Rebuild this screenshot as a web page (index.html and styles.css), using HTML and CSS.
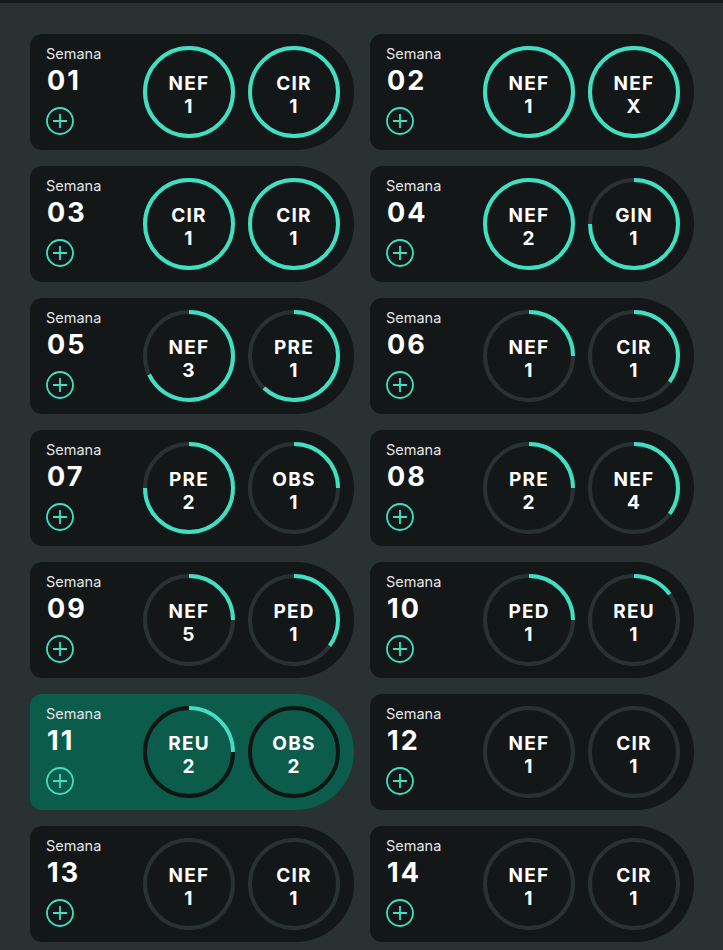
FILE: index.html
```html
<!DOCTYPE html>
<html lang="es">
<head>
<meta charset="utf-8">
<link rel="stylesheet" href="styles.css">
</head>
<body>
<div class="topbar"></div>
<main class="grid">
  <div class="card">
    <div class="info"><span class="label">Semana</span><span class="num">01</span>
      <svg class="add" viewBox="0 0 28 28"><circle cx="14" cy="14" r="13"/><path d="M14 7v14M7 14h14"/></svg></div>
    <div class="rings">
      <div class="ring"><svg viewBox="0 0 92 92"><circle class="track" cx="46" cy="46" r="44"/><circle class="prog" cx="46" cy="46" r="44" pathLength="100" stroke-dasharray="100 100"/></svg><span class="rt">NEF<br>1</span></div>
      <div class="ring"><svg viewBox="0 0 92 92"><circle class="track" cx="46" cy="46" r="44"/><circle class="prog" cx="46" cy="46" r="44" pathLength="100" stroke-dasharray="100 100"/></svg><span class="rt">CIR<br>1</span></div>
    </div>
  </div>
  <div class="card">
    <div class="info"><span class="label">Semana</span><span class="num">02</span>
      <svg class="add" viewBox="0 0 28 28"><circle cx="14" cy="14" r="13"/><path d="M14 7v14M7 14h14"/></svg></div>
    <div class="rings">
      <div class="ring"><svg viewBox="0 0 92 92"><circle class="track" cx="46" cy="46" r="44"/><circle class="prog" cx="46" cy="46" r="44" pathLength="100" stroke-dasharray="100 100"/></svg><span class="rt">NEF<br>1</span></div>
      <div class="ring"><svg viewBox="0 0 92 92"><circle class="track" cx="46" cy="46" r="44"/><circle class="prog" cx="46" cy="46" r="44" pathLength="100" stroke-dasharray="100 100"/></svg><span class="rt">NEF<br>X</span></div>
    </div>
  </div>
  <div class="card">
    <div class="info"><span class="label">Semana</span><span class="num">03</span>
      <svg class="add" viewBox="0 0 28 28"><circle cx="14" cy="14" r="13"/><path d="M14 7v14M7 14h14"/></svg></div>
    <div class="rings">
      <div class="ring"><svg viewBox="0 0 92 92"><circle class="track" cx="46" cy="46" r="44"/><circle class="prog" cx="46" cy="46" r="44" pathLength="100" stroke-dasharray="100 100"/></svg><span class="rt">CIR<br>1</span></div>
      <div class="ring"><svg viewBox="0 0 92 92"><circle class="track" cx="46" cy="46" r="44"/><circle class="prog" cx="46" cy="46" r="44" pathLength="100" stroke-dasharray="100 100"/></svg><span class="rt">CIR<br>1</span></div>
    </div>
  </div>
  <div class="card">
    <div class="info"><span class="label">Semana</span><span class="num">04</span>
      <svg class="add" viewBox="0 0 28 28"><circle cx="14" cy="14" r="13"/><path d="M14 7v14M7 14h14"/></svg></div>
    <div class="rings">
      <div class="ring"><svg viewBox="0 0 92 92"><circle class="track" cx="46" cy="46" r="44"/><circle class="prog" cx="46" cy="46" r="44" pathLength="100" stroke-dasharray="100 100"/></svg><span class="rt">NEF<br>2</span></div>
      <div class="ring"><svg viewBox="0 0 92 92"><circle class="track" cx="46" cy="46" r="44"/><circle class="prog" cx="46" cy="46" r="44" pathLength="100" stroke-dasharray="75 100"/></svg><span class="rt">GIN<br>1</span></div>
    </div>
  </div>
  <div class="card">
    <div class="info"><span class="label">Semana</span><span class="num">05</span>
      <svg class="add" viewBox="0 0 28 28"><circle cx="14" cy="14" r="13"/><path d="M14 7v14M7 14h14"/></svg></div>
    <div class="rings">
      <div class="ring"><svg viewBox="0 0 92 92"><circle class="track" cx="46" cy="46" r="44"/><circle class="prog" cx="46" cy="46" r="44" pathLength="100" stroke-dasharray="68 100"/></svg><span class="rt">NEF<br>3</span></div>
      <div class="ring"><svg viewBox="0 0 92 92"><circle class="track" cx="46" cy="46" r="44"/><circle class="prog" cx="46" cy="46" r="44" pathLength="100" stroke-dasharray="62 100"/></svg><span class="rt">PRE<br>1</span></div>
    </div>
  </div>
  <div class="card">
    <div class="info"><span class="label">Semana</span><span class="num">06</span>
      <svg class="add" viewBox="0 0 28 28"><circle cx="14" cy="14" r="13"/><path d="M14 7v14M7 14h14"/></svg></div>
    <div class="rings">
      <div class="ring"><svg viewBox="0 0 92 92"><circle class="track" cx="46" cy="46" r="44"/><circle class="prog" cx="46" cy="46" r="44" pathLength="100" stroke-dasharray="25 100"/></svg><span class="rt">NEF<br>1</span></div>
      <div class="ring"><svg viewBox="0 0 92 92"><circle class="track" cx="46" cy="46" r="44"/><circle class="prog" cx="46" cy="46" r="44" pathLength="100" stroke-dasharray="35 100"/></svg><span class="rt">CIR<br>1</span></div>
    </div>
  </div>
  <div class="card">
    <div class="info"><span class="label">Semana</span><span class="num">07</span>
      <svg class="add" viewBox="0 0 28 28"><circle cx="14" cy="14" r="13"/><path d="M14 7v14M7 14h14"/></svg></div>
    <div class="rings">
      <div class="ring"><svg viewBox="0 0 92 92"><circle class="track" cx="46" cy="46" r="44"/><circle class="prog" cx="46" cy="46" r="44" pathLength="100" stroke-dasharray="75 100"/></svg><span class="rt">PRE<br>2</span></div>
      <div class="ring"><svg viewBox="0 0 92 92"><circle class="track" cx="46" cy="46" r="44"/><circle class="prog" cx="46" cy="46" r="44" pathLength="100" stroke-dasharray="25 100"/></svg><span class="rt">OBS<br>1</span></div>
    </div>
  </div>
  <div class="card">
    <div class="info"><span class="label">Semana</span><span class="num">08</span>
      <svg class="add" viewBox="0 0 28 28"><circle cx="14" cy="14" r="13"/><path d="M14 7v14M7 14h14"/></svg></div>
    <div class="rings">
      <div class="ring"><svg viewBox="0 0 92 92"><circle class="track" cx="46" cy="46" r="44"/><circle class="prog" cx="46" cy="46" r="44" pathLength="100" stroke-dasharray="25 100"/></svg><span class="rt">PRE<br>2</span></div>
      <div class="ring"><svg viewBox="0 0 92 92"><circle class="track" cx="46" cy="46" r="44"/><circle class="prog" cx="46" cy="46" r="44" pathLength="100" stroke-dasharray="35 100"/></svg><span class="rt">NEF<br>4</span></div>
    </div>
  </div>
  <div class="card">
    <div class="info"><span class="label">Semana</span><span class="num">09</span>
      <svg class="add" viewBox="0 0 28 28"><circle cx="14" cy="14" r="13"/><path d="M14 7v14M7 14h14"/></svg></div>
    <div class="rings">
      <div class="ring"><svg viewBox="0 0 92 92"><circle class="track" cx="46" cy="46" r="44"/><circle class="prog" cx="46" cy="46" r="44" pathLength="100" stroke-dasharray="25 100"/></svg><span class="rt">NEF<br>5</span></div>
      <div class="ring"><svg viewBox="0 0 92 92"><circle class="track" cx="46" cy="46" r="44"/><circle class="prog" cx="46" cy="46" r="44" pathLength="100" stroke-dasharray="35 100"/></svg><span class="rt">PED<br>1</span></div>
    </div>
  </div>
  <div class="card">
    <div class="info"><span class="label">Semana</span><span class="num">10</span>
      <svg class="add" viewBox="0 0 28 28"><circle cx="14" cy="14" r="13"/><path d="M14 7v14M7 14h14"/></svg></div>
    <div class="rings">
      <div class="ring"><svg viewBox="0 0 92 92"><circle class="track" cx="46" cy="46" r="44"/><circle class="prog" cx="46" cy="46" r="44" pathLength="100" stroke-dasharray="25 100"/></svg><span class="rt">PED<br>1</span></div>
      <div class="ring"><svg viewBox="0 0 92 92"><circle class="track" cx="46" cy="46" r="44"/><circle class="prog" cx="46" cy="46" r="44" pathLength="100" stroke-dasharray="15 100"/></svg><span class="rt">REU<br>1</span></div>
    </div>
  </div>
  <div class="card current">
    <div class="info"><span class="label">Semana</span><span class="num">11</span>
      <svg class="add" viewBox="0 0 28 28"><circle cx="14" cy="14" r="13"/><path d="M14 7v14M7 14h14"/></svg></div>
    <div class="rings">
      <div class="ring"><svg viewBox="0 0 92 92"><circle class="track" cx="46" cy="46" r="44"/><circle class="prog" cx="46" cy="46" r="44" pathLength="100" stroke-dasharray="25 100"/></svg><span class="rt">REU<br>2</span></div>
      <div class="ring"><svg viewBox="0 0 92 92"><circle class="track" cx="46" cy="46" r="44"/></svg><span class="rt">OBS<br>2</span></div>
    </div>
  </div>
  <div class="card">
    <div class="info"><span class="label">Semana</span><span class="num">12</span>
      <svg class="add" viewBox="0 0 28 28"><circle cx="14" cy="14" r="13"/><path d="M14 7v14M7 14h14"/></svg></div>
    <div class="rings">
      <div class="ring"><svg viewBox="0 0 92 92"><circle class="track" cx="46" cy="46" r="44"/></svg><span class="rt">NEF<br>1</span></div>
      <div class="ring"><svg viewBox="0 0 92 92"><circle class="track" cx="46" cy="46" r="44"/></svg><span class="rt">CIR<br>1</span></div>
    </div>
  </div>
  <div class="card">
    <div class="info"><span class="label">Semana</span><span class="num">13</span>
      <svg class="add" viewBox="0 0 28 28"><circle cx="14" cy="14" r="13"/><path d="M14 7v14M7 14h14"/></svg></div>
    <div class="rings">
      <div class="ring"><svg viewBox="0 0 92 92"><circle class="track" cx="46" cy="46" r="44"/></svg><span class="rt">NEF<br>1</span></div>
      <div class="ring"><svg viewBox="0 0 92 92"><circle class="track" cx="46" cy="46" r="44"/></svg><span class="rt">CIR<br>1</span></div>
    </div>
  </div>
  <div class="card">
    <div class="info"><span class="label">Semana</span><span class="num">14</span>
      <svg class="add" viewBox="0 0 28 28"><circle cx="14" cy="14" r="13"/><path d="M14 7v14M7 14h14"/></svg></div>
    <div class="rings">
      <div class="ring"><svg viewBox="0 0 92 92"><circle class="track" cx="46" cy="46" r="44"/></svg><span class="rt">NEF<br>1</span></div>
      <div class="ring"><svg viewBox="0 0 92 92"><circle class="track" cx="46" cy="46" r="44"/></svg><span class="rt">CIR<br>1</span></div>
    </div>
  </div>
</main>
</body>
</html>
```
FILE: styles.css
```css
html, body {
  margin: 0;
  padding: 0;
  background: #2a3133;
  height: 950px;
  overflow: hidden;
  font-family: Inter, "Noto Sans", sans-serif;
  color: #ffffff;
}
.topbar {
  height: 3px;
  background: #151a1b;
}
.grid {
  display: grid;
  grid-template-columns: 324px 324px;
  column-gap: 16px;
  row-gap: 16px;
  padding: 31px 0 0 30px;
}
.card {
  height: 116px;
  box-sizing: border-box;
  background: #131718;
  border-radius: 12px 58px 58px 12px;
  display: flex;
  align-items: center;
  justify-content: space-between;
  padding: 0 14px 0 16px;
}
.card.current {
  background: #0b5c4a;
}
.info {
  display: flex;
  flex-direction: column;
  align-items: flex-start;
  align-self: stretch;
  padding-top: 11px;
}
.label {
  font-size: 14.5px;
  line-height: 18px;
  color: #e4e6e6;
}
.num {
  font-size: 27px;
  font-weight: 700;
  line-height: 30px;
  letter-spacing: 2px;
  margin-top: 3px;
  margin-left: 1px;
}
.add {
  width: 28px;
  height: 28px;
  margin-top: 11px;
  fill: none;
  stroke: #3fe0c2;
  stroke-width: 1.8;
}
.rings {
  display: flex;
  gap: 13px;
}
.ring {
  width: 92px;
  height: 92px;
  position: relative;
  display: flex;
  align-items: center;
  justify-content: center;
}
.ring svg {
  position: absolute;
  inset: 0;
  width: 92px;
  height: 92px;
  transform: rotate(-90deg);
}
.track {
  fill: none;
  stroke: #2a3133;
  stroke-width: 4;
}
.current .track {
  stroke: #0f1515;
}
.prog {
  fill: none;
  stroke: #3fe0c2;
  stroke-width: 4;
}
.rt {
  position: relative;
  text-align: center;
  font-size: 19px;
  font-weight: 700;
  line-height: 23px;
  letter-spacing: 1.2px;
  padding-top: 6px;
}
```
